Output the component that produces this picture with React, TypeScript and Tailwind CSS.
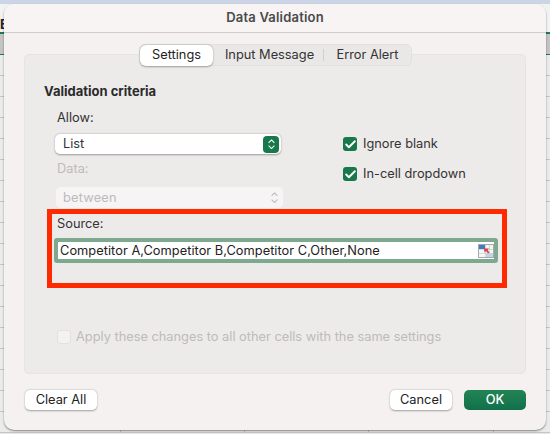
import { ChevronDown, ChevronUp, Check } from "lucide-react";

const FONT = "font-['Inter','Liberation_Sans',sans-serif]";

function Stepper({ disabled }: { disabled?: boolean }) {
  return (
    <span
      className={`flex h-[17px] w-[16px] flex-col items-center justify-center rounded-[4px] ${
        disabled ? "text-[#bcbaba]" : "bg-[#17784c] text-white"
      }`}
    >
      <ChevronUp size={11} strokeWidth={2.4} className="-mb-[2px]" />
      <ChevronDown size={11} strokeWidth={2.4} className="-mt-[2px]" />
    </span>
  );
}

function CheckRow({ label }: { label: string }) {
  return (
    <div className="flex h-[16px] items-center gap-[6px]">
      <span className="flex h-[14px] w-[14px] items-center justify-center rounded-[3px] bg-[#17784c] text-white">
        <Check size={13} strokeWidth={3.5} />
      </span>
      <span className="text-[12.8px] text-[#333333]">{label}</span>
    </div>
  );
}

function RefEditIcon() {
  return (
    <svg width="16" height="14" viewBox="0 0 16 14" className="shrink-0">
      <rect x="0.5" y="0.5" width="15" height="13" fill="#f4f6f8" stroke="#a9a9a9" />
      <path d="M1 9.5H15M1 5.5H15M7.5 1V13M11.5 1V13" stroke="#c9ccd0" strokeWidth="0.7" />
      <rect x="8" y="9" width="7" height="4" fill="#c6d3e6" />
      <rect x="1" y="1" width="6" height="4" fill="#3f7cc4" />
      <path d="M6 4.5h5l-1.5 1.5 2 2.5-1.5 1-2-2.5-1.5 1.5z" fill="#d8403a" />
    </svg>
  );
}

export default function App() {
  return (
    <div className={`relative h-[434px] w-[550px] overflow-hidden bg-[#e6e6e6] ${FONT}`}>
      {/* sheet behind the dialog */}
      <div className="h-[4px] bg-[#ccd5e6]" />
      <div className="h-[28px] bg-[#f2f2f2] text-[13px] font-bold leading-[40px] text-[#222222]">E</div>
      <div className="h-[2px] bg-[#1d7a4c]" />
      <div className="h-[20px] bg-[#c4c4c4]" />
      <div className="h-[1px] bg-[#1d7a4c]" />
      <div className="flex flex-col">
        {Array.from({ length: 18 }).map((_, i) => (
          <div key={i} className="flex h-[21px] border-b border-[#c6c6c6] bg-[#ebebeb]">
            <div className="h-full w-[121px] shrink-0 border-r border-[#c6c6c6]" />
            <div className="h-full w-[124px] shrink-0 border-r border-[#c6c6c6]" />
            <div className="h-full w-[124px] shrink-0 border-r border-[#c6c6c6]" />
            <div className="h-full w-[125px] shrink-0 border-r border-[#c6c6c6]" />
          </div>
        ))}
      </div>

      {/* dialog */}
      <div className="absolute left-[4px] top-[4px] flex h-[426px] w-[542px] flex-col rounded-[10px] bg-[#f5f1f1] shadow-[0_1px_2px_rgba(0,0,0,0.45)]">
        <div className="flex h-[29px] shrink-0 items-center justify-center rounded-t-[10px] border-b border-[#cfcccc] bg-[#f8f4f4] text-[13px] font-semibold tracking-[0.2px] text-[#4a4a4a]">
          Data Validation
        </div>

        <div className="relative mx-[20px] mt-[21px] h-[320px] shrink-0 rounded-[5px] border border-[#e6e3e3] bg-[#edeaea]">
          {/* tabs */}
          <div className="absolute left-[114px] top-[-11px] flex h-[22px] w-[273px] items-center rounded-[6px] border border-[#e3e0e0] bg-[#eae7e7] text-[12.8px] text-[#333333]">
            <div className="flex h-[21px] w-[73px] items-center justify-center rounded-[6px] bg-white text-[#222222] shadow-[0_0.5px_2px_rgba(0,0,0,0.35)]">
              Settings
            </div>
            <div className="flex w-[110px] justify-center pl-[3px]">Input Message</div>
            <div className="h-[12px] w-px bg-[#d3d0d0]" />
            <div className="flex flex-1 justify-center">Error Alert</div>
          </div>

          <div className="flex flex-col pl-[19px] pt-[28px]">
            <div className="text-[13px] font-bold leading-[16px] text-[#2b2b2b]">Validation criteria</div>

            <div className="flex">
              <div className="flex w-[299px] shrink-0 flex-col">
                <div className="ml-[13px] mt-[11px] text-[12.8px] leading-[16px] text-[#333333]">Allow:</div>
                <div className="ml-[11px] mt-[8px] flex h-[20px] w-[226px] items-center justify-between rounded-[5px] bg-white pl-[8px] pr-[2px] text-[12.8px] text-[#333333] shadow-[0_0.5px_2px_rgba(0,0,0,0.35)]">
                  List
                  <Stepper />
                </div>
                <div className="ml-[13px] mt-[7px] text-[12.8px] leading-[16px] text-[#bdbbbb]">Data:</div>
                <div className="ml-[12px] mt-[10px] flex h-[21px] w-[227px] items-center justify-between rounded-[5px] bg-[#f6f4f4] pl-[7px] pr-[1px] text-[12.8px] tracking-[0.2px] text-[#bdbbbb]">
                  between
                  <Stepper disabled />
                </div>
              </div>
              <div className="mt-[37px] flex flex-col gap-[14px]">
                <CheckRow label="Ignore blank" />
                <CheckRow label="In-cell dropdown" />
              </div>
            </div>

            <div className="ml-[13px] mt-[8px] text-[12.8px] leading-[16px] text-[#333333]">Source:</div>
            <div className="ml-[10px] mt-[6px] flex h-[25px] w-[444px] items-center justify-between rounded-[3px] border-[4px] border-[#7fa98e] bg-white pl-[2px] text-[12.8px] tracking-[0.04px] text-[#222222]">
              Competitor A,Competitor B,Competitor C,Other,None
              <RefEditIcon />
            </div>

            <div className="ml-[13px] mt-[66px] flex h-[16px] items-center gap-[5px]">
              <span className="h-[14px] w-[14px] rounded-[3px] border border-[#e2e0e0] bg-[#f3f1f1]" />
              <span className="text-[12.8px] text-[#bdbbbb]">
                Apply these changes to all other cells with the same settings
              </span>
            </div>
          </div>

          {/* red highlight drawn on top of the screenshot */}
          <div className="absolute left-[22px] top-[154px] h-[79px] w-[460px] border-[5px] border-[#ff2a00]" />
        </div>

        <div className="ml-[21px] mr-[20px] mt-[16px] flex items-center justify-between text-[12.8px]">
          <div className="flex h-[20px] w-[72px] items-center justify-center rounded-[5px] bg-white text-[#222222] shadow-[0_0.5px_2px_rgba(0,0,0,0.35)]">
            Clear All
          </div>
          <div className="flex gap-[12px]">
            <div className="flex h-[20px] w-[62px] items-center justify-center rounded-[5px] bg-white text-[#222222] shadow-[0_0.5px_2px_rgba(0,0,0,0.35)]">
              Cancel
            </div>
            <div className="flex h-[20px] w-[62px] items-center justify-center rounded-[5px] bg-gradient-to-b from-[#228455] to-[#11704a] font-medium text-white">
              OK
            </div>
          </div>
        </div>
      </div>
    </div>
  );
}
